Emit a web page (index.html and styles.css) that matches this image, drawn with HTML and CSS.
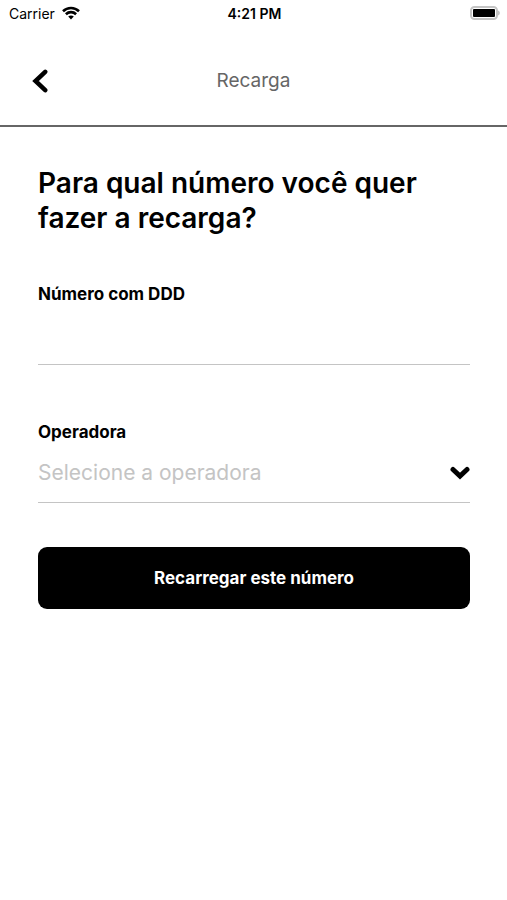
FILE: index.html
```html
<!DOCTYPE html>
<html lang="pt-BR">
<head>
  <meta charset="UTF-8">
  <meta name="viewport" content="width=device-width, initial-scale=1.0">
  <title>Recarga</title>
  <link rel="stylesheet" href="styles.css">
</head>
<body>
  <div class="status-bar">
    <div class="carrier">
      <span>Carrier</span>
      <svg class="wifi" viewBox="0 0 18 14" aria-hidden="true">
        <path d="M1 5.2C5.5 0.9 12.5 0.9 17 5.2" />
        <path d="M3.9 8.2C6.8 5.4 11.2 5.4 14.1 8.2" />
        <path class="dot" d="M9 13.4L6.2 10.5C7.8 9 10.2 9 11.8 10.5Z" />
      </svg>
    </div>
    <span class="time">4:21 PM</span>
    <svg class="battery" viewBox="0 0 30 14" aria-hidden="true">
      <rect class="shell" x="1" y="1" width="26" height="12" rx="3.5" />
      <rect x="3" y="3" width="22" height="8" rx="1" />
      <path class="cap" d="M28 4.5C30.5 5.3 30.5 8.7 28 9.5Z" />
    </svg>
  </div>

  <header class="header">
    <button class="back" type="button" aria-label="Voltar">
      <svg viewBox="0 0 16 24" aria-hidden="true">
        <path d="M13.2 2.8L3.5 12L13.2 21.2" />
      </svg>
    </button>
    <span class="header-title">Recarga</span>
  </header>

  <main class="content">
    <h1>Para qual número você quer fazer a recarga?</h1>
    <form>
      <div class="field">
        <label for="numero">Número com DDD</label>
        <input id="numero" type="tel">
      </div>
      <div class="field">
        <label for="operadora">Operadora</label>
        <div class="select-row">
          <select id="operadora">
            <option value="">Selecione a operadora</option>
          </select>
          <svg class="chevron" viewBox="0 0 20 14" aria-hidden="true">
            <path d="M3 3.5L10 10L17 3.5" />
          </svg>
        </div>
      </div>
      <button class="submit" type="button">Recarregar este número</button>
    </form>
  </main>
</body>
</html>
```

FILE: styles.css
```css
* {
  box-sizing: border-box;
}
body {
  margin: 0;
  background-color: #fff;
  color: #000;
  font-family: Inter, "Liberation Sans", sans-serif;
}
.status-bar {
  display: grid;
  grid-template-columns: 1fr auto 1fr;
  align-items: center;
  height: 26px;
  padding: 0 7px 0 9px;
  font-size: 14px;
}
.carrier {
  display: flex;
  align-items: center;
  gap: 7px;
}
.wifi {
  width: 18px;
  height: 14px;
  fill: none;
  stroke: #000;
  stroke-width: 2.6;
}
.wifi .dot {
  fill: #000;
  stroke: none;
}
.time {
  font-weight: 600;
}
.battery {
  justify-self: end;
  width: 30px;
  height: 14px;
}
.battery .shell {
  fill: none;
  stroke: #c4c4c4;
  stroke-width: 2;
}
.battery .cap {
  fill: #c4c4c4;
}
.header {
  display: grid;
  grid-template-columns: 1fr auto 1fr;
  align-items: center;
  height: 101px;
  padding: 10px 32px 0;
  border-bottom: 2px solid #666;
}
.back {
  justify-self: start;
  padding: 0;
  border: 0;
  background: none;
}
.back svg {
  display: block;
  width: 16px;
  height: 24px;
  fill: none;
  stroke: #000;
  stroke-width: 4.5;
  stroke-linecap: round;
}
.header-title {
  color: #666;
  font-size: 19px;
}
.content {
  padding: 39px 37px 0 38px;
}
h1 {
  margin: 0 0 47px;
  font-size: 28px;
  font-weight: 600;
  line-height: 35px;
}
.field {
  display: flex;
  flex-direction: column;
  margin-bottom: 56px;
}
.field label {
  font-size: 17px;
  font-weight: 700;
  line-height: 22px;
}
.field input,
.field select {
  width: 100%;
  height: 60px;
  padding: 0;
  border: 0;
  border-bottom: 1px solid #c4c4c4;
  border-radius: 0;
  outline: 0;
  background: none;
  font-family: inherit;
  font-size: 21px;
}
.field select {
  appearance: none;
  color: #c4c4c4;
}
.select-row {
  display: grid;
  align-items: center;
}
.select-row > * {
  grid-area: 1 / 1;
}
.chevron {
  justify-self: end;
  width: 20px;
  height: 14px;
  fill: none;
  stroke: #000;
  stroke-width: 5;
  stroke-linecap: round;
  pointer-events: none;
}
.submit {
  width: 100%;
  height: 62px;
  margin-top: -12px;
  border: 0;
  border-radius: 9px;
  background-color: #000;
  color: #fff;
  font-family: inherit;
  font-size: 17px;
  font-weight: 700;
}
```
